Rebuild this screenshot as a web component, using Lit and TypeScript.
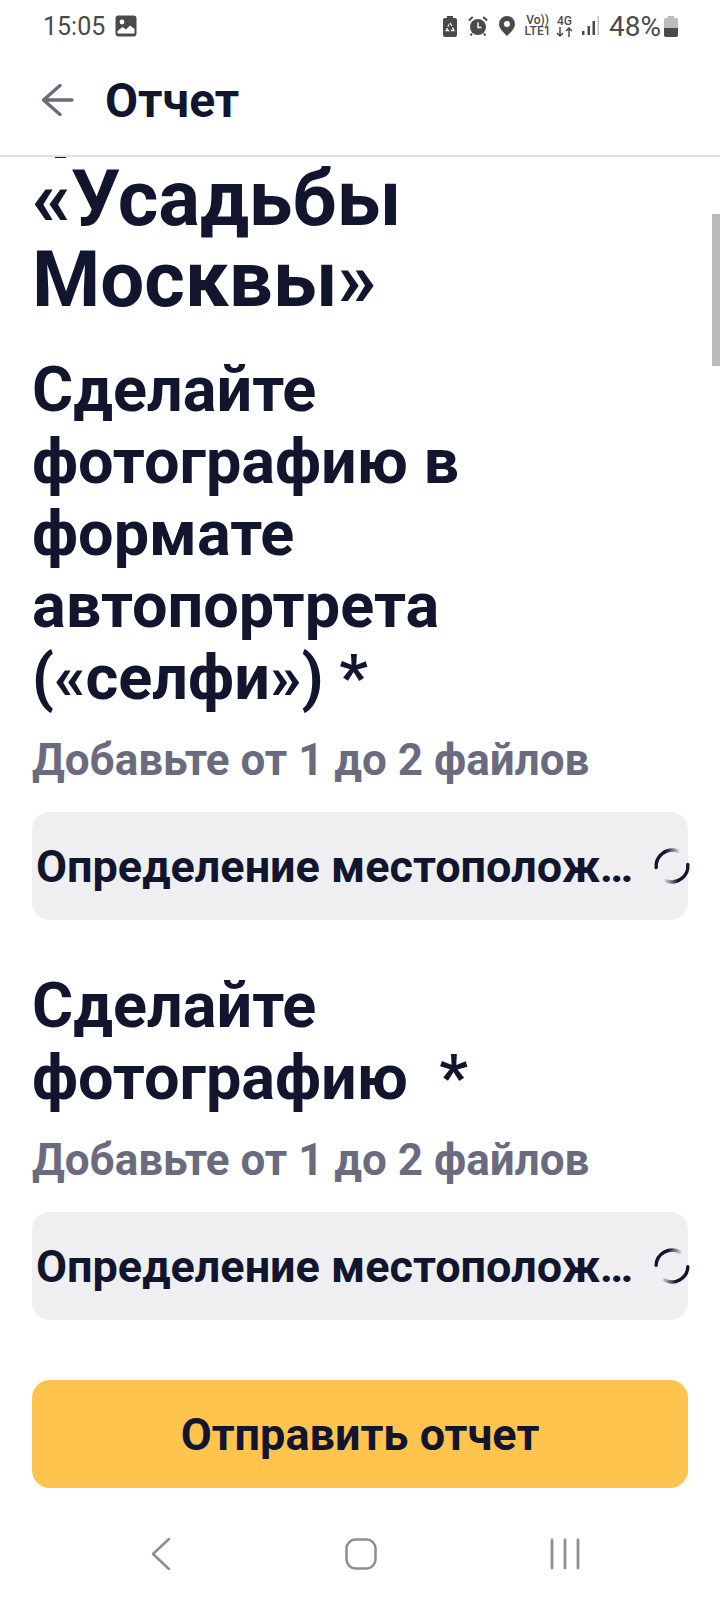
import { LitElement, css, html, svg } from "lit";
import { customElement } from "lit/decorators.js";

const spinner = (angle: number, id: string) => html`
    <svg class="spinner" viewBox="0 0 36 36" style="transform: rotate(${angle}deg)">
        <defs>
            <linearGradient id=${id} gradientUnits="userSpaceOnUse" x1="12" y1="0" x2="27" y2="0">
                <stop offset="0" stop-color="#11152e"></stop>
                <stop offset="1" stop-color="#11152e" stop-opacity="0"></stop>
            </linearGradient>
        </defs>
        ${[0, 180].map(
            (r) => svg`<path transform="rotate(${r} 18 18)" d="M2.2 19.5A16 16 0 0 1 24 3.2" fill="none"
                stroke="url(#${id})" stroke-width="3.4" stroke-linecap="round"></path>`
        )}
    </svg>
`;

@customElement("app-root")
export class AppRoot extends LitElement {
    uploadCard(angle: number, id: string) {
        return html`
            <div class="upload">
                <span class="upload-text">Определение местоположения</span>
                ${spinner(angle, id)}
            </div>
        `;
    }

    render() {
        return html`
            <div class="status">
                <div class="status-left">
                    <span class="time">15:05</span>
                    <svg width="22" height="22" viewBox="0 0 22 22">
                        <rect width="21" height="21" x="0.5" y="0.5" rx="3" fill="#4a4a4a"></rect>
                        <circle cx="7" cy="7" r="2.4" fill="#fff"></circle>
                        <path d="M2.5 18.5v-2.5l5-4 3.5 2.5 4-4 4.5 3.5v4.5z" fill="#fff"></path>
                    </svg>
                </div>
                <div class="status-right">
                    <svg width="14" height="21" viewBox="0 0 14 21">
                        <path d="M4 0h6v2h2a2 2 0 0 1 2 2v15a2 2 0 0 1-2 2H2a2 2 0 0 1-2-2V4a2 2 0 0 1 2-2h2z" fill="#4a4a4a"></path>
                        <path d="M7 7l2 3M4.500 12l-1.200 2.500h3M9.500 11.500l1.400 3H8M6 8.500L4.900 10.500" stroke="#fff" stroke-width="1.300" fill="none"></path>
                    </svg>
                    <svg class="gap-alarm" width="20" height="20" viewBox="0 0 20 20">
                        <circle cx="10" cy="11" r="8" fill="#4a4a4a"></circle>
                        <path d="M10 6.500v5h3.500" stroke="#fff" stroke-width="1.500" fill="none"></path>
                        <path d="M0.800 4.500l4-3.500M19.200 4.500l-4-3.500M4 17.500l-1.500 2M16 17.500l1.500 2" stroke="#4a4a4a" stroke-width="2"></path>
                    </svg>
                    <svg class="gap-pin" width="16" height="20" viewBox="0 0 16 20">
                        <path d="M8 0a8 8 0 0 1 8 8c0 4.500-4.500 8.500-8 12-3.500-3.500-8-7.500-8-12a8 8 0 0 1 8-8z" fill="#4a4a4a"></path>
                        <circle cx="8" cy="8" r="3" fill="#fff"></circle>
                    </svg>
                    <div class="net volte"><span>Vo))</span><span>LTE1</span></div>
                    <div class="net lte">
                        <span>4G</span>
                        <svg width="17" height="10" viewBox="0 0 17 10">
                            <path d="M4 0v9M1 6l3 3 3-3M13 10V1M10 4l3-3 3 3" fill="none" stroke="#4a4a4a" stroke-width="1.500"></path>
                        </svg>
                    </div>
                    <svg class="gap-signal" width="17" height="20" viewBox="0 0 17 20">
                        <rect x="0" y="15" width="2.500" height="4" fill="#4a4a4a"></rect>
                        <rect x="5.500" y="10" width="2.500" height="9" fill="#4a4a4a"></rect>
                        <rect x="10.500" y="5" width="2.500" height="14" fill="#4a4a4a"></rect>
                        <rect x="15.500" y="0" width="1.500" height="19" fill="#c4c4c4"></rect>
                    </svg>
                    <span class="percent">48%</span>
                    <svg width="14" height="21" viewBox="0 0 14 21">
                        <path d="M4 0h6v2h2a2 2 0 0 1 2 2v15a2 2 0 0 1-2 2H2a2 2 0 0 1-2-2V4a2 2 0 0 1 2-2h2z" fill="#bdbdbd"></path>
                        <path d="M0 12h14v7a2 2 0 0 1-2 2H2a2 2 0 0 1-2-2z" fill="#4a4a4a"></path>
                    </svg>
                </div>
            </div>

            <header class="topbar">
                <svg class="back" width="32" height="32" viewBox="0 0 32 32">
                    <path d="M18 1.500L1.500 16 18 30.500M1.500 16H30" fill="none" stroke="#6a6b7f" stroke-width="3.400" stroke-linecap="round" stroke-linejoin="round"></path>
                </svg>
                <span class="topbar-title">Отчет</span>
            </header>

            <main class="content">
                <div class="clip-tail"></div>
                <h1>«Усадьбы Москвы»</h1>
                <h2>Сделайте фотографию в формате автопортрета («селфи») *</h2>
                <p class="hint">Добавьте от 1 до 2 файлов</p>
                ${this.uploadCard(0, "spin-a")}
                <h2 class="second">Сделайте<br />фотографию&nbsp; *</h2>
                <p class="hint">Добавьте от 1 до 2 файлов</p>
                ${this.uploadCard(8, "spin-b")}
                <button class="submit">Отправить отчет</button>
                <div class="scrollbar"></div>
            </main>

            <nav class="navbar">
                <svg width="20" height="34" viewBox="0 0 20 34">
                    <path d="M18 2L2 17l16 15" fill="none" stroke="#8e8e8e" stroke-width="2.500" stroke-linecap="round" stroke-linejoin="round"></path>
                </svg>
                <svg width="32" height="32" viewBox="0 0 32 32">
                    <rect x="1.500" y="1.500" width="29" height="29" rx="9" fill="none" stroke="#8e8e8e" stroke-width="2.500"></rect>
                </svg>
                <svg width="30" height="32" viewBox="0 0 30 32">
                    <path d="M2 2v28M15 2v28M28 2v28" stroke="#8e8e8e" stroke-width="2.800" stroke-linecap="round"></path>
                </svg>
            </nav>
        `;
    }

    static styles = css`
        :host {
            display: flex;
            flex-direction: column;
            width: 720px;
            height: 1600px;
            background: #fff;
            color: #11152e;
            font-family: Roboto, "Liberation Sans", sans-serif;
            overflow: hidden;
        }

        * {
            box-sizing: border-box;
        }

        .status {
            flex: none;
            height: 56px;
            display: flex;
            align-items: center;
            justify-content: space-between;
            padding: 0 42px 4px 43px;
            color: #4a4a4a;
        }

        .status-left,
        .status-right {
            display: flex;
            align-items: center;
        }

        .time {
            font-size: 25px;
            margin-right: 10px;
        }

        .gap-alarm {
            margin-left: 11px;
        }

        .gap-pin {
            margin-left: 11px;
        }

        .net {
            display: flex;
            flex-direction: column;
            align-items: center;
            font-size: 12px;
            font-weight: 500;
            line-height: 11px;
            white-space: nowrap;
        }

        .volte {
            width: 25px;
            margin-left: 10px;
        }

        .lte {
            width: 17px;
            margin-left: 6px;
        }

        .gap-signal {
            margin-left: 9px;
        }

        .percent {
            font-size: 28px;
            margin: 0 3px 0 10px;
        }

        .topbar {
            flex: none;
            height: 101px;
            display: flex;
            align-items: center;
            gap: 31px;
            padding: 0 0 11px 42px;
            border-bottom: 2px solid #e3e3e3;
        }

        .topbar-title {
            font-size: 48px;
            font-weight: 700;
        }

        .content {
            position: relative;
            flex: 1;
            min-height: 0;
            padding: 0 32px;
            overflow: hidden;
        }

        .clip-tail {
            width: 11px;
            height: 1px;
            margin-left: 23px;
            background: #11152e;
        }

        h1 {
            margin: 0;
            font-size: 78px;
            line-height: 81px;
            font-weight: 700;
        }

        h2 {
            margin: 34px 0 0;
            font-size: 63px;
            line-height: 72px;
            font-weight: 700;
        }

        h2.second {
            margin-top: 50px;
        }

        .hint {
            margin: 22px 0 0;
            font-size: 44px;
            line-height: 48px;
            font-weight: 700;
            color: #6a6b7f;
        }

        .upload {
            display: flex;
            align-items: center;
            height: 108px;
            margin-top: 28px;
            padding-left: 4px;
            background: #efeff2;
            border-radius: 18px;
        }

        .upload-text {
            width: 603px;
            flex: none;
            font-size: 45px;
            font-weight: 700;
            white-space: nowrap;
            overflow: hidden;
            text-overflow: ellipsis;
        }

        .spinner {
            flex: none;
            width: 36px;
            height: 36px;
            margin-left: 15px;
            overflow: visible;
        }

        .submit {
            display: block;
            width: 656px;
            height: 108px;
            margin-top: 60px;
            border: none;
            border-radius: 18px;
            background: #ffc44d;
            color: #11152e;
            font: 700 45px Roboto, "Liberation Sans", sans-serif;
        }

        .scrollbar {
            position: absolute;
            top: 57px;
            right: 0;
            width: 8px;
            height: 152px;
            background: #bbb;
        }

        .navbar {
            flex: none;
            height: 86px;
            display: flex;
            align-items: center;
            justify-content: space-between;
            padding: 0 140px 6px 151px;
        }
    `;
}
